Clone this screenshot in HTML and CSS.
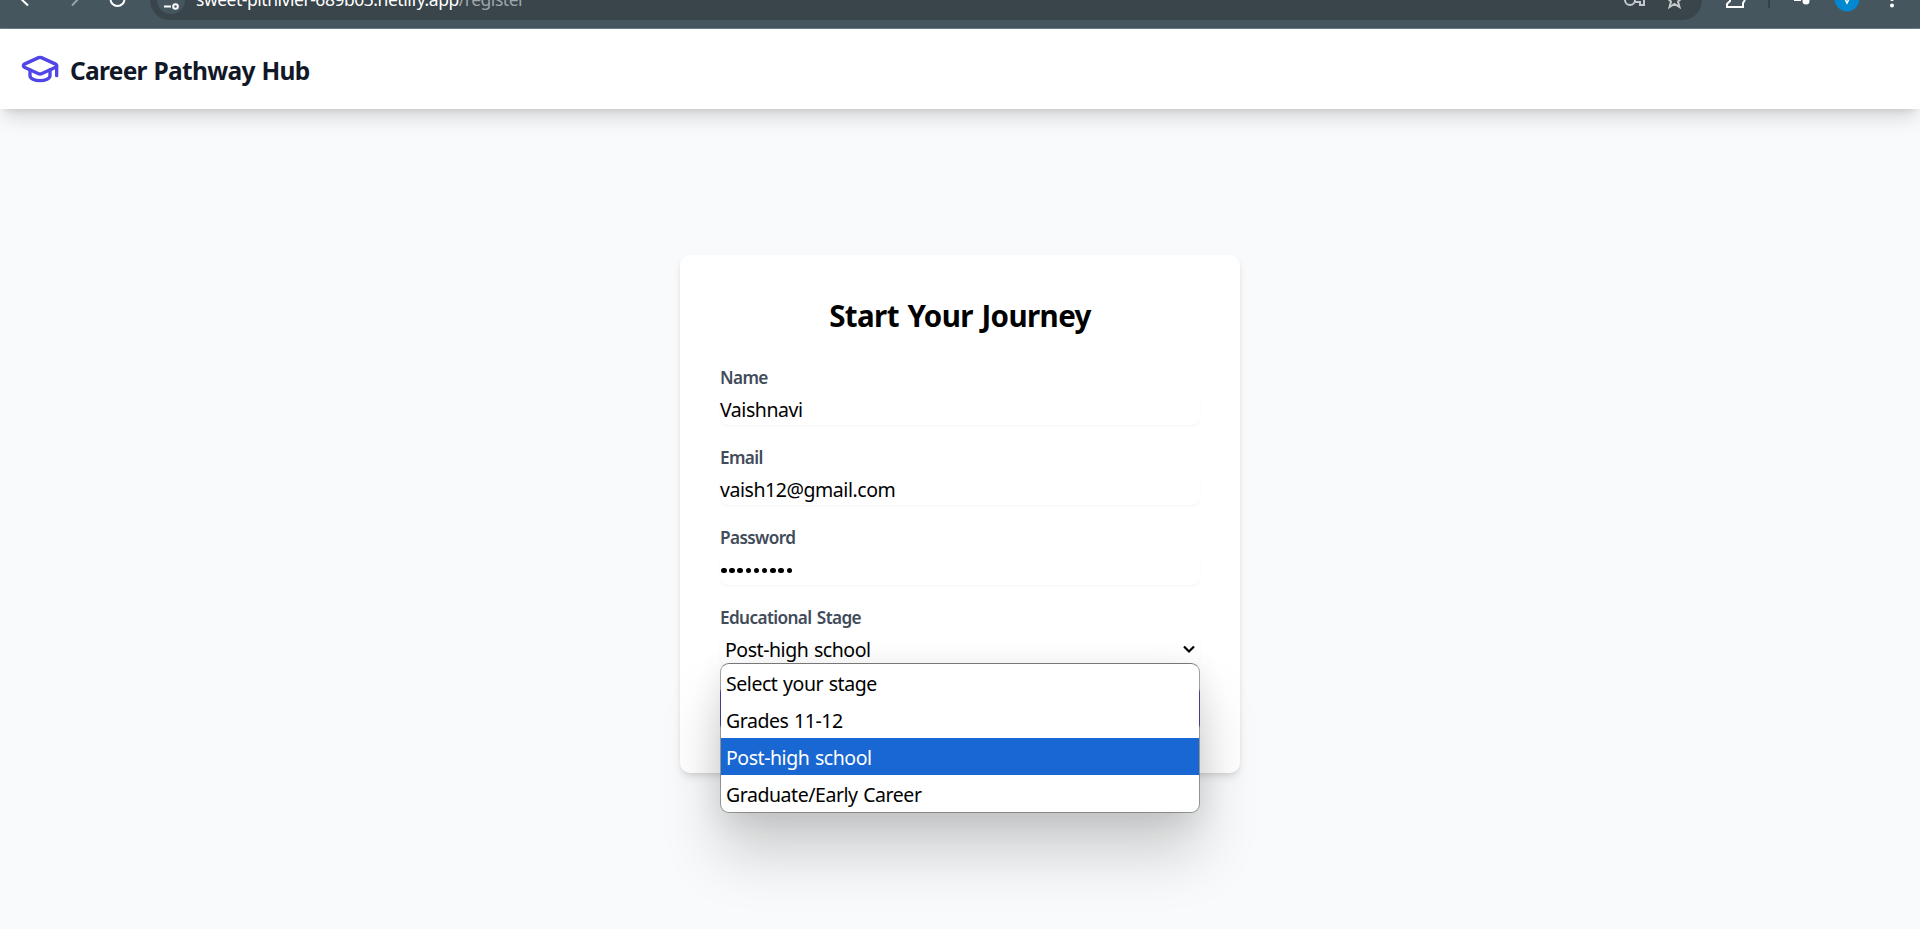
FILE: index.html
```
<!DOCTYPE html>
<html lang="en">
<head>
<meta charset="utf-8">
<title>Career Pathway Hub</title>
<link rel="stylesheet" href="styles.css">
</head>
<body>
<div class="toolbar">
  <svg class="nav-icons" width="130" height="28" viewBox="0 0 130 28" fill="none" stroke-width="2">
    <path d="M18 -4L28 5.500" stroke="#fff"/>
    <path d="M72 5.500L81 -4" stroke="#9aa4a9"/>
    <circle cx="117.500" cy="-1" r="7" stroke="#fff"/>
  </svg>
  <div class="omnibox">
    <span class="site"><svg width="26" height="14" viewBox="0 0 26 14" fill="none" stroke="#fff" stroke-width="2"><path d="M6 3.500h7"/><circle cx="17.500" cy="3.500" r="2.300"/></svg></span>
    <span class="url">sweet-pithivier-689b03.netlify.app<span class="path">/register</span></span>
    <svg class="box-icons" width="70" height="20" viewBox="0 0 70 20" fill="none" stroke="#c3c8cb" stroke-width="2">
      <circle cx="8" cy="0" r="5"/><path d="M12 -1H22V5H18V2H12"/>
      <path d="M45 -2L49 1.500L47.500 7L52.500 4L57.500 7L56 1.500L60 -2"/>
    </svg>
  </div>
  <svg class="tools" width="220" height="28" viewBox="0 0 220 28" fill="none" stroke="#fff" stroke-width="2">
    <path d="M30 -2V1L27 4V7H43V3L45 0"/>
    <path d="M69 0V8" stroke="#36434a"/>
    <path d="M94 0h7"/><circle cx="106" cy="1" r="3.500" fill="#fff" stroke="none"/>
    <circle cx="147" cy="-1" r="12.500" fill="#0288d1" stroke="none"/><path d="M145 -1L147 3L149 -1" stroke-width="1.500"/>
    <circle cx="192" cy="5.500" r="2" fill="#fff" stroke="none"/><circle cx="192" cy="-1" r="2" fill="#fff" stroke="none"/>
  </svg>
</div>
<header class="header">
  <svg class="logo" width="40" height="40" viewBox="0 0 24 24" fill="none" stroke="#4f46e5" stroke-width="2" stroke-linecap="round" stroke-linejoin="round">
    <path d="M21.420 10.922a1 1 0 0 0-.019-1.838L12.830 5.180a2 2 0 0 0-1.660 0L2.600 9.080a1 1 0 0 0 0 1.832l8.570 3.908a2 2 0 0 0 1.660 0z"/><path d="M22 10v6"/><path d="M6 12.500V16a6 3 0 0 0 12 0v-3.500"/>
  </svg>
  <span class="brand">Career Pathway Hub</span>
</header>
<main class="main">
  <form class="card">
    <h1 class="title">Start Your Journey</h1>
    <div class="field"><label class="label">Name</label><div class="input">Vaishnavi</div></div>
    <div class="field"><label class="label">Email</label><div class="input">vaish12@gmail.com</div></div>
    <div class="field"><label class="label">Password</label><div class="input dots"><i></i><i></i><i></i><i></i><i></i><i></i><i></i><i></i><i></i></div></div>
    <div class="field stage"><label class="label">Educational Stage</label>
      <div class="input select"><span>Post-high school</span><svg class="chevron" width="12" height="9" viewBox="0 0 12 9" fill="none" stroke="#000" stroke-width="2.200"><path d="M1 1.500L6 6.500L11 1.500"/></svg></div>
      <div class="menu">
        <div class="option">Select your stage</div>
        <div class="option">Grades 11-12</div>
        <div class="option selected">Post-high school</div>
        <div class="option">Graduate/Early Career</div>
      </div>
    </div>
    <div class="submit"></div>
  </form>
</main>
</body>
</html>
```
FILE: styles.css
```
* { box-sizing: border-box; }
body { margin: 0; height: 929px; overflow: hidden; display: flex; flex-direction: column; background: #f9fafb; font-family: "Noto Sans", "Open Sans", sans-serif; color: #000; }
.toolbar { height: 29px; flex: none; display: flex; background: #45565f; border-bottom: 1px solid #6e7b82; overflow: hidden; }
.nav-icons { margin-right: 20px; flex: none; }
.omnibox { width: 1552px; flex: none; height: 40px; margin-top: -20px; padding: 20px 10px 0 7px; border-radius: 20px; background: #39444b; display: flex; }
.tools { flex: none; margin-left: -2px; }
.site { width: 28px; height: 28px; margin-top: -14px; padding: 14px 0 0 1px; border-radius: 50%; background: #45565f; display: block; }
.url { margin: -13px 0 0 11px; font-size: 17.500px; line-height: 25px; letter-spacing: -0.470px; color: #fff; white-space: nowrap; }
.path { color: #9ea6aa; }
.box-icons { margin-left: auto; }
.header { height: 80px; flex: none; position: relative; display: flex; align-items: center; padding: 0 20px; gap: 10px; background: #fff; box-shadow: 0 12px 19px -4px rgba(0,0,0,.14), 0 5px 8px -5px rgba(0,0,0,.14); }
.brand { font-size: 24.500px; line-height: 35px; font-weight: 700; letter-spacing: -0.700px; word-spacing: 1px; color: #111827; padding-top: 3px; white-space: nowrap; }
.main { display: flex; justify-content: center; padding-top: 146px; }
.card { width: 560px; height: 518px; padding: 40px; border-radius: 10px; background: #fff; box-shadow: 0 5px 8px -1px rgba(0,0,0,.1), 0 2px 5px -2px rgba(0,0,0,.1); }
.title { margin: 0 0 30px; font-size: 29.500px; line-height: 41px; height: 40px; font-weight: 700; letter-spacing: -0.600px; word-spacing: 1.500px; text-align: center; }
.field { margin-bottom: 20px; }
.label { display: block; font-size: 17.200px; line-height: 25px; font-weight: 600; letter-spacing: -0.620px; word-spacing: 1.500px; color: #414b5a; margin-bottom: 5px; }
.input { height: 30px; line-height: 30px; font-size: 19.500px; letter-spacing: -0.450px; word-spacing: 1px; border-radius: 8px; box-shadow: 0 1px 2px rgba(0,0,0,.05); white-space: nowrap; }
.dots { display: flex; align-items: center; gap: 2.700px; padding: 1px 0 0 1px; }
.dots i { width: 5.500px; height: 5.500px; border-radius: 50%; background: #000; }
.stage { position: relative; }
.select { display: flex; justify-content: space-between; align-items: center; padding: 0 5px; }
.chevron { margin-top: -2px; }
.menu { position: absolute; top: 58px; left: 0; width: 480px; height: 150px; border: 1px solid rgba(60,60,60,.45); border-top-color: #777; border-radius: 9px; background: #fff; background-clip: padding-box; overflow: hidden; box-shadow: 0 40px 60px rgba(0,0,0,.18), 0 6px 30px rgba(0,0,0,.09); }
.option { height: 37px; line-height: 39px; padding-left: 5px; font-size: 19.500px; letter-spacing: -0.450px; word-spacing: 1px; }
.selected { background: #1967d2; color: #fff; }
.submit { height: 47px; border-radius: 8px; background: #4f46e5; }
```
